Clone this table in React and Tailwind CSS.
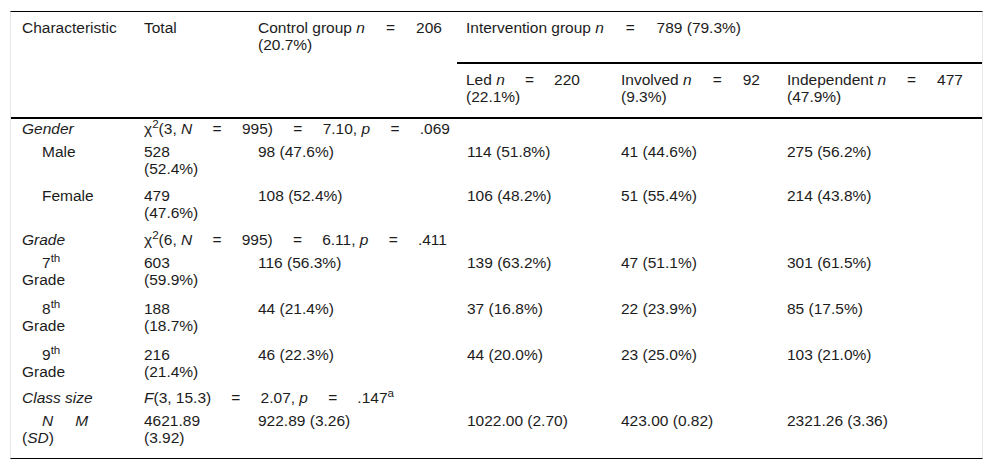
import React from "react";

const cols = "grid grid-cols-[123px_114px_209px_154px_166px_205px]";

/* cell with the first line justified to a fixed width */
const Spread = ({ w, parts }) => (
    <div className={`flex justify-between ${w}`}>
        {parts.map((p, i) => (
            <span key={i}>{p}</span>
        ))}
    </div>
);

const Row = ({ h, children }) => (
    <div className={`${cols} ${h}`}>{children}</div>
);

const Cell = ({ className = "", children }) => (
    <div className={`pl-[10px] pt-[1px] ${className}`}>{children}</div>
);

export default function App() {
    return (
        <div className="w-[992px] h-[472px] bg-white pl-[10px] pt-[11px] text-[15.5px] leading-[17px] text-[#1c1c1c]" style={{ fontFamily: '"Liberation Sans", Arial, sans-serif' }}>
            <div className="w-[973px] border-x border-x-[#e6e6e6] border-t border-t-black border-b border-b-black">

                {/* header */}
                <div className={`${cols} grid-rows-[52px_53px] border-b-2 border-black`}>
                    <div className="row-span-2 pl-[11px] pt-[7px]">Characteristic</div>
                    <div className="row-span-2 pl-[10px] pt-[7px]">Total</div>
                    <div className="row-span-2 pl-[10px] pt-[7px]">
                        <Spread w="w-[184px]" parts={[<>Control group <i>n</i></>, "=", "206"]} />
                        <div>(20.7%)</div>
                    </div>
                    <div className="col-span-3 border-b-2 border-black pl-[9px] pt-[7px]">
                        <Spread w="w-[275px]" parts={[<>Intervention group <i>n</i></>, "=", "789 (79.3%)"]} />
                    </div>
                    <div className="pl-[9px] pt-[7px]">
                        <Spread w="w-[114px]" parts={[<>Led <i>n</i></>, "=", "220"]} />
                        <div>(22.1%)</div>
                    </div>
                    <div className="pl-[10px] pt-[7px]">
                        <Spread w="w-[139px]" parts={[<>Involved <i>n</i></>, "=", "92"]} />
                        <div>(9.3%)</div>
                    </div>
                    <div className="pl-[10px] pt-[7px]">
                        <Spread w="w-[176px]" parts={[<>Independent <i>n</i></>, "=", "477"]} />
                        <div>(47.9%)</div>
                    </div>
                </div>

                {/* gender */}
                <Row h="h-[23px]">
                    <Cell className="pl-[11px]"><i>Gender</i></Cell>
                    <Cell className="col-span-5">
                        <Spread w="w-[306px]" parts={[<>χ<sup>2</sup>(3, <i>N</i></>, "=", "995)", "=", <>7.10, <i>p</i></>, "=", ".069"]} />
                    </Cell>
                </Row>
                <Row h="h-[44px]">
                    <Cell className="pl-[11px] indent-[20px]">Male</Cell>
                    <Cell>528<br />(52.4%)</Cell>
                    <Cell>98 (47.6%)</Cell>
                    <Cell className="pl-[9px]">114 (51.8%)</Cell>
                    <Cell>41 (44.6%)</Cell>
                    <Cell>275 (56.2%)</Cell>
                </Row>
                <Row h="h-[44px]">
                    <Cell className="pl-[11px] indent-[20px]">Female</Cell>
                    <Cell>479<br />(47.6%)</Cell>
                    <Cell>108 (52.4%)</Cell>
                    <Cell className="pl-[9px]">106 (48.2%)</Cell>
                    <Cell>51 (55.4%)</Cell>
                    <Cell>214 (43.8%)</Cell>
                </Row>

                {/* grade */}
                <Row h="h-[23px]">
                    <Cell className="pl-[11px]"><i>Grade</i></Cell>
                    <Cell className="col-span-5">
                        <Spread w="w-[303px]" parts={[<>χ<sup>2</sup>(6, <i>N</i></>, "=", "995)", "=", <>6.11, <i>p</i></>, "=", ".411"]} />
                    </Cell>
                </Row>
                <Row h="h-[46px]">
                    <Cell className="pl-[11px] indent-[20px]">7<sup>th</sup><br />Grade</Cell>
                    <Cell>603<br />(59.9%)</Cell>
                    <Cell>116 (56.3%)</Cell>
                    <Cell className="pl-[9px]">139 (63.2%)</Cell>
                    <Cell>47 (51.1%)</Cell>
                    <Cell>301 (61.5%)</Cell>
                </Row>
                <Row h="h-[46px]">
                    <Cell className="pl-[11px] indent-[20px]">8<sup>th</sup><br />Grade</Cell>
                    <Cell>188<br />(18.7%)</Cell>
                    <Cell>44 (21.4%)</Cell>
                    <Cell className="pl-[9px]">37 (16.8%)</Cell>
                    <Cell>22 (23.9%)</Cell>
                    <Cell>85 (17.5%)</Cell>
                </Row>
                <Row h="h-[43px]">
                    <Cell className="pl-[11px] indent-[20px]">9<sup>th</sup><br />Grade</Cell>
                    <Cell>216<br />(21.4%)</Cell>
                    <Cell>46 (22.3%)</Cell>
                    <Cell className="pl-[9px]">44 (20.0%)</Cell>
                    <Cell>23 (25.0%)</Cell>
                    <Cell>103 (21.0%)</Cell>
                </Row>

                {/* class size */}
                <Row h="h-[23px]">
                    <Cell className="pl-[11px]"><i>Class size</i></Cell>
                    <Cell className="col-span-5 pl-[8px]">
                        <Spread w="w-[250px]" parts={[<><i>F</i>(3, 15.3)</>, "=", <>2.07, <i>p</i></>, "=", <>.147<sup>a</sup></>]} />
                    </Cell>
                </Row>
                <Row h="h-[47px]">
                    <Cell className="pl-[11px] indent-[20px]"><i>N</i><span className="ml-[22px]"><i>M</i></span><br />(<i>SD</i>)</Cell>
                    <Cell>4621.89<br />(3.92)</Cell>
                    <Cell>922.89 (3.26)</Cell>
                    <Cell className="pl-[9px]">1022.00 (2.70)</Cell>
                    <Cell>423.00 (0.82)</Cell>
                    <Cell>2321.26 (3.36)</Cell>
                </Row>
            </div>
        </div>
    );
}
